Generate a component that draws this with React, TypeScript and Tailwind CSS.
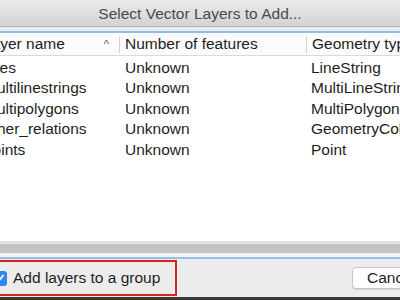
const rows = [
	{ name: 'lines', count: 'Unknown', geom: 'LineString' },
	{ name: 'multilinestrings', count: 'Unknown', geom: 'MultiLineString' },
	{ name: 'multipolygons', count: 'Unknown', geom: 'MultiPolygon' },
	{ name: 'other_relations', count: 'Unknown', geom: 'GeometryCollection' },
	{ name: 'points', count: 'Unknown', geom: 'Point' }
]

export default function App() {
	return (
		<div
			className="relative flex h-[300px] w-[400px] flex-col overflow-hidden bg-[#ececec] text-[15.5px] text-[#1e1e1e]"
			style={{ fontFamily: '"Liberation Sans", Arial, sans-serif' }}
		>
			<div className="flex h-[27px] shrink-0 items-center justify-center border-b border-[#b3b3b3] bg-gradient-to-b from-[#ebebeb] to-[#d3d3d3] pt-[2px] text-[#4a4a4a]">
				Select Vector Layers to Add...
			</div>
			<div className="h-[4px] shrink-0 bg-[#ececec]" />
			<div className="h-[2px] shrink-0 bg-[#8fbbf0]" />

			<div className="ml-[-22px] flex h-[208px] w-[440px] shrink-0 flex-col bg-white">
				<div className="flex h-[23px] shrink-0 items-center border-b border-[#dadada] bg-[#fbfbfb]">
					<div className="flex h-full w-[141px] shrink-0 items-center pl-[5px]">
						<span>Layer name</span>
						<span className="ml-auto mr-[10px] text-[11px] text-[#555]">^</span>
					</div>
					<div className="h-[17px] w-px shrink-0 bg-[#d4d4d4]" />
					<div className="w-[186px] shrink-0 pl-[5px]">Number of features</div>
					<div className="h-[17px] w-px shrink-0 bg-[#d4d4d4]" />
					<div className="shrink-0 whitespace-nowrap pl-[5px]">Geometry type</div>
				</div>
				<div className="flex flex-col pt-[1px]">
					{rows.map((row) => (
						<div key={row.name} className="flex h-[20.5px] items-center whitespace-nowrap">
							<div className="w-[141px] shrink-0 overflow-hidden pl-[6px]">{row.name}</div>
							<div className="w-[187px] shrink-0 overflow-hidden pl-[6px]">{row.count}</div>
							<div className="shrink-0 pl-[5px]">{row.geom}</div>
						</div>
					))}
				</div>
			</div>

			<div className="h-[3px] shrink-0 bg-[#e2e2e2]" />
			<div className="h-[9px] shrink-0 bg-[#c3c3c3]" />
			<div className="h-[4px] shrink-0 bg-[#f3f3f3]" />
			<div className="h-[2px] shrink-0 bg-[#96c0f1]" />

			<div className="flex h-[38px] shrink-0 items-center">
				<div className="ml-[-20px] flex h-[36px] w-[197px] shrink-0 items-center border-2 border-[#d8261d]">
					<div className="ml-[10px] flex h-[15px] w-[15px] shrink-0 items-center justify-center rounded-[3px] bg-[#2f86f5]">
						<svg width="11" height="11" viewBox="0 0 11 11">
							<path d="M2 5.8 L4.5 8.3 L9 2.5" fill="none" stroke="white" strokeWidth="1.8" strokeLinecap="round" strokeLinejoin="round" />
						</svg>
					</div>
					<span className="ml-[6px] whitespace-nowrap">Add layers to a group</span>
				</div>
				<div className="ml-auto mr-[-30px] flex h-[22px] w-[78px] shrink-0 items-center rounded-[4px] border border-[#c6c6c6] bg-white pl-[14px] shadow-[0_1px_1px_rgba(0,0,0,0.1)]">
					Cancel
				</div>
			</div>
			<div className="flex-1 bg-[#3a3a3a]" />
		</div>
	)
}
